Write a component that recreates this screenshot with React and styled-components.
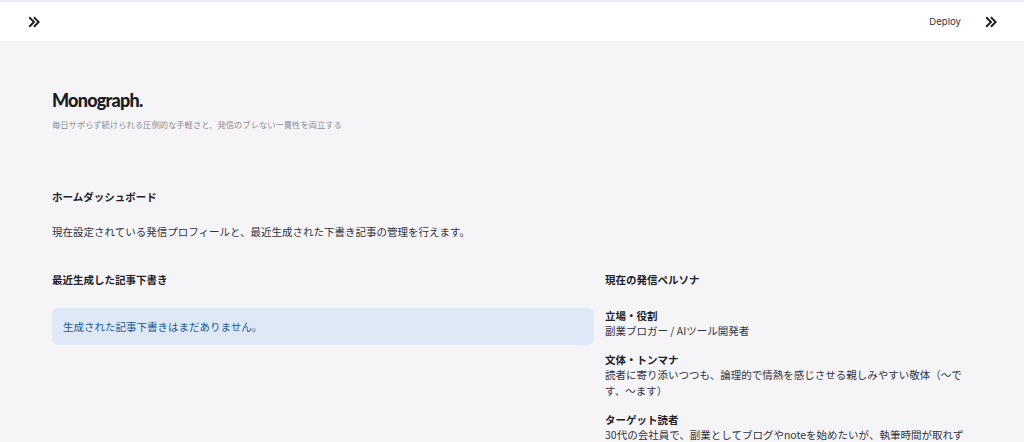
import React from 'react'
import styled, { createGlobalStyle } from 'styled-components'

const GlobalStyle = createGlobalStyle`
    html, body {
        margin: 0;
        padding: 0;
        background: #f5f5f7;
        font-family: "Noto Sans CJK JP", "Noto Sans", sans-serif;
        color: #31333f;
    }
`

const persona = [
    { label: '立場・役割', value: '副業ブロガー / AIツール開発者' },
    { label: '文体・トンマナ', value: '読者に寄り添いつつも、論理的で情熱を感じさせる親しみやすい敬体（〜です、〜ます）' },
    { label: 'ターゲット読者', value: '30代の会社員で、副業としてブログやnoteを始めたいが、執筆時間が取れず悩んでいる人' },
]

function Chevrons() {
    return (
        <svg width="14" height="14" viewBox="0 0 24 24" fill="none" stroke="#1a1a1a" strokeWidth="3.2" strokeLinecap="square" strokeLinejoin="miter">
            <polyline points="5,5 12,12 5,19" />
            <polyline points="13,5 20,12 13,19" />
        </svg>
    )
}

export default function App() {
    return (
        <Page>
            <GlobalStyle />
            <Header>
                <IconButton><Chevrons /></IconButton>
                <HeaderRight>
                    <Deploy>Deploy</Deploy>
                    <IconButton><Chevrons /></IconButton>
                </HeaderRight>
            </Header>
            <Main>
                <Brand>Monograph.</Brand>
                <Tagline>毎日サボらず続けられる圧倒的な手軽さと、発信のブレない一貫性を両立する</Tagline>
                <SectionTitle>ホームダッシュボード</SectionTitle>
                <Lead>現在設定されている発信プロフィールと、最近生成された下書き記事の管理を行えます。</Lead>
                <Columns>
                    <Column>
                        <ColumnTitle>最近生成した記事下書き</ColumnTitle>
                        <InfoBox>生成された記事下書きはまだありません。</InfoBox>
                    </Column>
                    <Column>
                        <ColumnTitle>現在の発信ペルソナ</ColumnTitle>
                        <PersonaList>
                            {persona.map(p => (
                                <PersonaItem key={p.label}>
                                    <PersonaLabel>{p.label}</PersonaLabel>
                                    <PersonaValue>{p.value}</PersonaValue>
                                </PersonaItem>
                            ))}
                        </PersonaList>
                    </Column>
                </Columns>
            </Main>
        </Page>
    )
}

const Page = styled.div`
    min-height: 100vh;
    background: #f5f5f7;
`
const Header = styled.div`
    height: 39px;
    background: #ffffff;
    border-top: 2px solid #ecebf7;
    display: flex;
    align-items: center;
    justify-content: space-between;
    padding: 0 27px;
`
const HeaderRight = styled.div`
    display: flex;
    align-items: center;
    gap: 23px;
    margin-right: -1px;
`
const IconButton = styled.div`
    width: 14px;
    height: 14px;
    display: flex;
    align-items: center;
    justify-content: center;
    margin-top: 1px;
`
const Deploy = styled.div`
    font-family: Inter, "Noto Sans", sans-serif;
    font-size: 9.6px;
    color: #31333f;
`
const Main = styled.div`
    padding: 47px 52px 0;
    width: 920px;
`
const Brand = styled.h1`
    margin: 0;
    font-family: Lato, "Noto Sans", sans-serif;
    font-weight: 900;
    font-size: 18px;
    letter-spacing: -0.75px;
    line-height: 24px;
    color: #1a1c23;
`
const Tagline = styled.div`
    margin-top: 6px;
    font-size: 8.3px;
    line-height: 12px;
    color: #8b8d96;
`
const SectionTitle = styled.h2`
    margin: 59px 0 0;
    font-size: 10.5px;
    font-weight: 700;
    line-height: 16px;
    color: #1f2129;
`
const Lead = styled.p`
    margin: 19px 0 0;
    font-size: 10.5px;
    line-height: 16px;
    color: #31333f;
`
const Columns = styled.div`
    margin-top: 32px;
    display: grid;
    grid-template-columns: 542px 364px;
    gap: 11px;
`
const Column = styled.div`
    display: flex;
    flex-direction: column;
`
const ColumnTitle = styled.h3`
    margin: 0;
    font-size: 10.5px;
    font-weight: 700;
    line-height: 16px;
    color: #1f2129;
`
const InfoBox = styled.div`
    margin-top: 20px;
    background: #dfe8f6;
    border-radius: 6px;
    padding: 10px 11px;
    font-size: 10.5px;
    line-height: 17px;
    color: #1c5a8f;
`
const PersonaList = styled.div`
    margin-top: 20px;
    display: flex;
    flex-direction: column;
    gap: 12px;
`
const PersonaItem = styled.div`
    display: flex;
    flex-direction: column;
`
const PersonaLabel = styled.div`
    font-size: 10.5px;
    font-weight: 700;
    line-height: 15px;
    color: #1f2129;
`
const PersonaValue = styled.div`
    font-size: 10.5px;
    line-height: 16.5px;
    color: #31333f;
`
